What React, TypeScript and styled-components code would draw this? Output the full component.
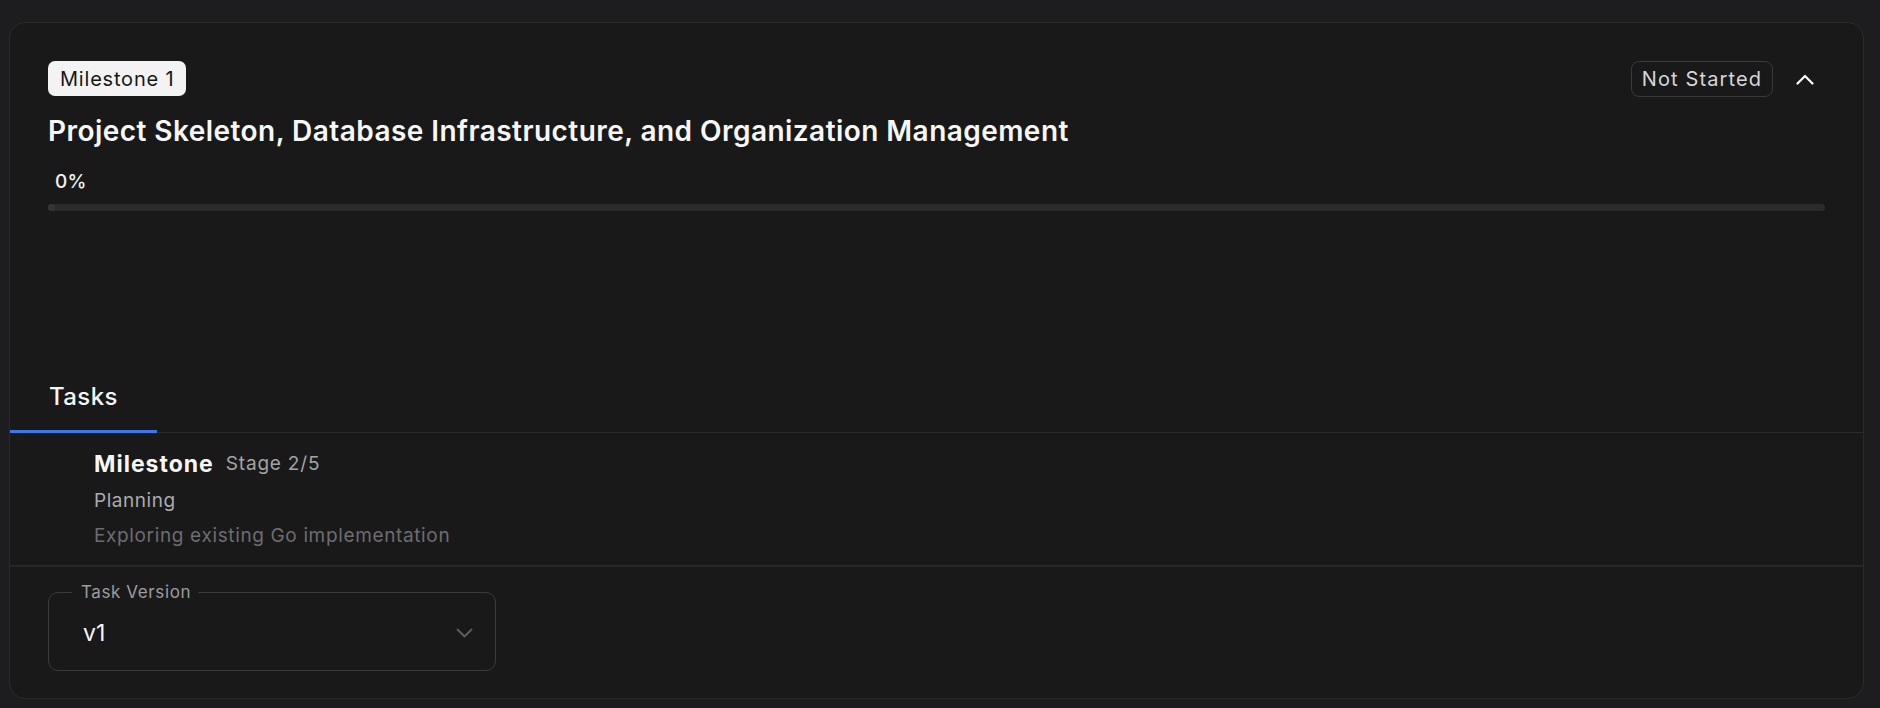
import React from "react";
import styled, { createGlobalStyle } from "styled-components";

const GlobalStyle = createGlobalStyle`
  html, body {
    margin: 0;
    padding: 0;
    background: #1d1d1f;
    font-family: Inter, "Noto Sans", "Liberation Sans", sans-serif;
    color: #f4f4f5;
  }
  * { box-sizing: border-box; }
`;

const Page = styled.div`
  padding: 22px 16px 10px 9px;
`;

const Card = styled.section`
  background: #19191a;
  border: 1px solid #2a2a2c;
  border-radius: 16px;
  overflow: hidden;
`;

const Header = styled.div`
  padding: 38px 38px 0 38px;
`;

const HeaderRow = styled.div`
  display: flex;
  justify-content: space-between;
  align-items: flex-start;
`;

const Chip = styled.span`
  display: inline-flex;
  align-items: center;
  height: 35px;
  padding: 0 12px;
  background: #f3f3f3;
  color: #161616;
  border-radius: 7px;
  font-size: 20px;
  letter-spacing: 0.8px;
`;

const HeaderActions = styled.div`
  display: flex;
  align-items: center;
  gap: 12px;
`;

const StatusBadge = styled.span`
  display: inline-flex;
  align-items: center;
  height: 36px;
  padding: 0 10px;
  border: 1px solid #3a3a3d;
  border-radius: 8px;
  color: #d6d6d8;
  font-size: 20px;
  letter-spacing: 1.1px;
`;

const IconButton = styled.button`
  width: 40px;
  height: 36px;
  display: inline-flex;
  align-items: center;
  justify-content: center;
  background: transparent;
  border: none;
  padding: 0;
  color: #ffffff;
  cursor: pointer;
`;

const Title = styled.h2`
  margin: 16px 0 0 0;
  font-size: 28px;
  line-height: 36px;
  font-weight: 600;
  color: #f7f7f7;
  letter-spacing: 0.45px;
`;

const Percent = styled.div`
  margin-top: 21px;
  padding-left: 7px;
  font-size: 19px;
  line-height: 24px;
  font-weight: 500;
  color: #f2f2f2;
  letter-spacing: 0.3px;
`;

const Track = styled.div`
  margin-top: 10px;
  height: 7px;
  border-radius: 4px;
  background: #2b2b2d;
  display: flex;
`;

const Fill = styled.div`
  min-width: 7px;
  height: 7px;
  border-radius: 4px;
  background: #353537;
`;

const TabBar = styled.div`
  margin-top: 162px;
  display: flex;
  border-bottom: 1px solid #2c2c2e;
`;

const Tab = styled.button<{ $active?: boolean }>`
  background: transparent;
  border: none;
  border-bottom: 3px solid ${(p) => (p.$active ? "#3b78ea" : "transparent")};
  margin-bottom: -1px;
  padding: 9px 39px 18px 39px;
  font-family: inherit;
  font-size: 24px;
  line-height: 30px;
  font-weight: 500;
  letter-spacing: 0.4px;
  color: #f5f5f5;
  cursor: pointer;
`;

const TaskList = styled.div`
  padding: 17px 38px 17px 84px;
  border-bottom: 2px solid #27272a;
`;

const TaskHead = styled.div`
  display: flex;
  align-items: center;
  gap: 12px;
`;

const TaskName = styled.span`
  font-size: 23px;
  line-height: 28px;
  font-weight: 700;
  letter-spacing: 1px;
  color: #f7f7f7;
`;

const StageText = styled.span`
  font-size: 19px;
  line-height: 24px;
  letter-spacing: 0.8px;
  color: #a4a4a6;
`;

const TaskLine = styled.div<{ $muted?: boolean; $gap: number }>`
  margin-top: ${(p) => p.$gap}px;
  font-size: 19px;
  line-height: 24px;
  letter-spacing: ${(p) => (p.$muted ? 0.64 : 0.55)}px;
  color: ${(p) => (p.$muted ? "#6d6d70" : "#ababae")};
`;

const Footer = styled.div`
  padding: 15px 38px 27px 38px;
`;

const SelectField = styled.fieldset`
  width: 448px;
  margin: 0;
  padding: 0;
  min-width: 0;
  border: 1px solid #3b3b3e;
  border-radius: 10px;
`;

const Legend = styled.legend`
  margin-left: 23px;
  padding: 0 7px 0 9px;
  font-size: 17px;
  line-height: 20px;
  letter-spacing: 0.6px;
  color: #9c9c9f;
`;

const SelectRow = styled.div`
  height: 61px;
  margin-bottom: 7px;
  display: flex;
  align-items: center;
  justify-content: space-between;
  padding: 0 22px 0 34px;
`;

const SelectValue = styled.span`
  font-size: 23px;
  line-height: 28px;
  color: #f4f4f5;
`;

const ChevronUp = () => (
  <svg width="18" height="11" viewBox="0 0 18 11" fill="none">
    <path d="M1.5 9.5 L9 2 L16.5 9.5" stroke="currentColor" strokeWidth="2.2" strokeLinecap="round" strokeLinejoin="round" />
  </svg>
);

const ChevronDown = () => (
  <svg width="17" height="10" viewBox="0 0 17 10" fill="none">
    <path d="M1.5 1.5 L8.5 8.5 L15.5 1.5" stroke="#5e5e62" strokeWidth="1.8" strokeLinecap="round" strokeLinejoin="round" />
  </svg>
);

export default function App() {
  const progress = 0;
  return (
    <>
      <GlobalStyle />
      <Page>
        <Card>
          <Header>
            <HeaderRow>
              <Chip>Milestone 1</Chip>
              <HeaderActions>
                <StatusBadge>Not Started</StatusBadge>
                <IconButton aria-label="Collapse">
                  <ChevronUp />
                </IconButton>
              </HeaderActions>
            </HeaderRow>
            <Title>Project Skeleton, Database Infrastructure, and Organization Management</Title>
            <Percent>{progress}%</Percent>
            <Track>
              <Fill style={{ width: `${progress}%` }} />
            </Track>
          </Header>
          <TabBar>
            <Tab $active>Tasks</Tab>
          </TabBar>
          <TaskList>
            <TaskHead>
              <TaskName>Milestone</TaskName>
              <StageText>Stage 2/5</StageText>
            </TaskHead>
            <TaskLine $gap={11}>Planning</TaskLine>
            <TaskLine $gap={11} $muted>Exploring existing Go implementation</TaskLine>
          </TaskList>
          <Footer>
            <SelectField>
              <Legend>Task Version</Legend>
              <SelectRow>
                <SelectValue>v1</SelectValue>
                <ChevronDown />
              </SelectRow>
            </SelectField>
          </Footer>
        </Card>
      </Page>
    </>
  );
}
